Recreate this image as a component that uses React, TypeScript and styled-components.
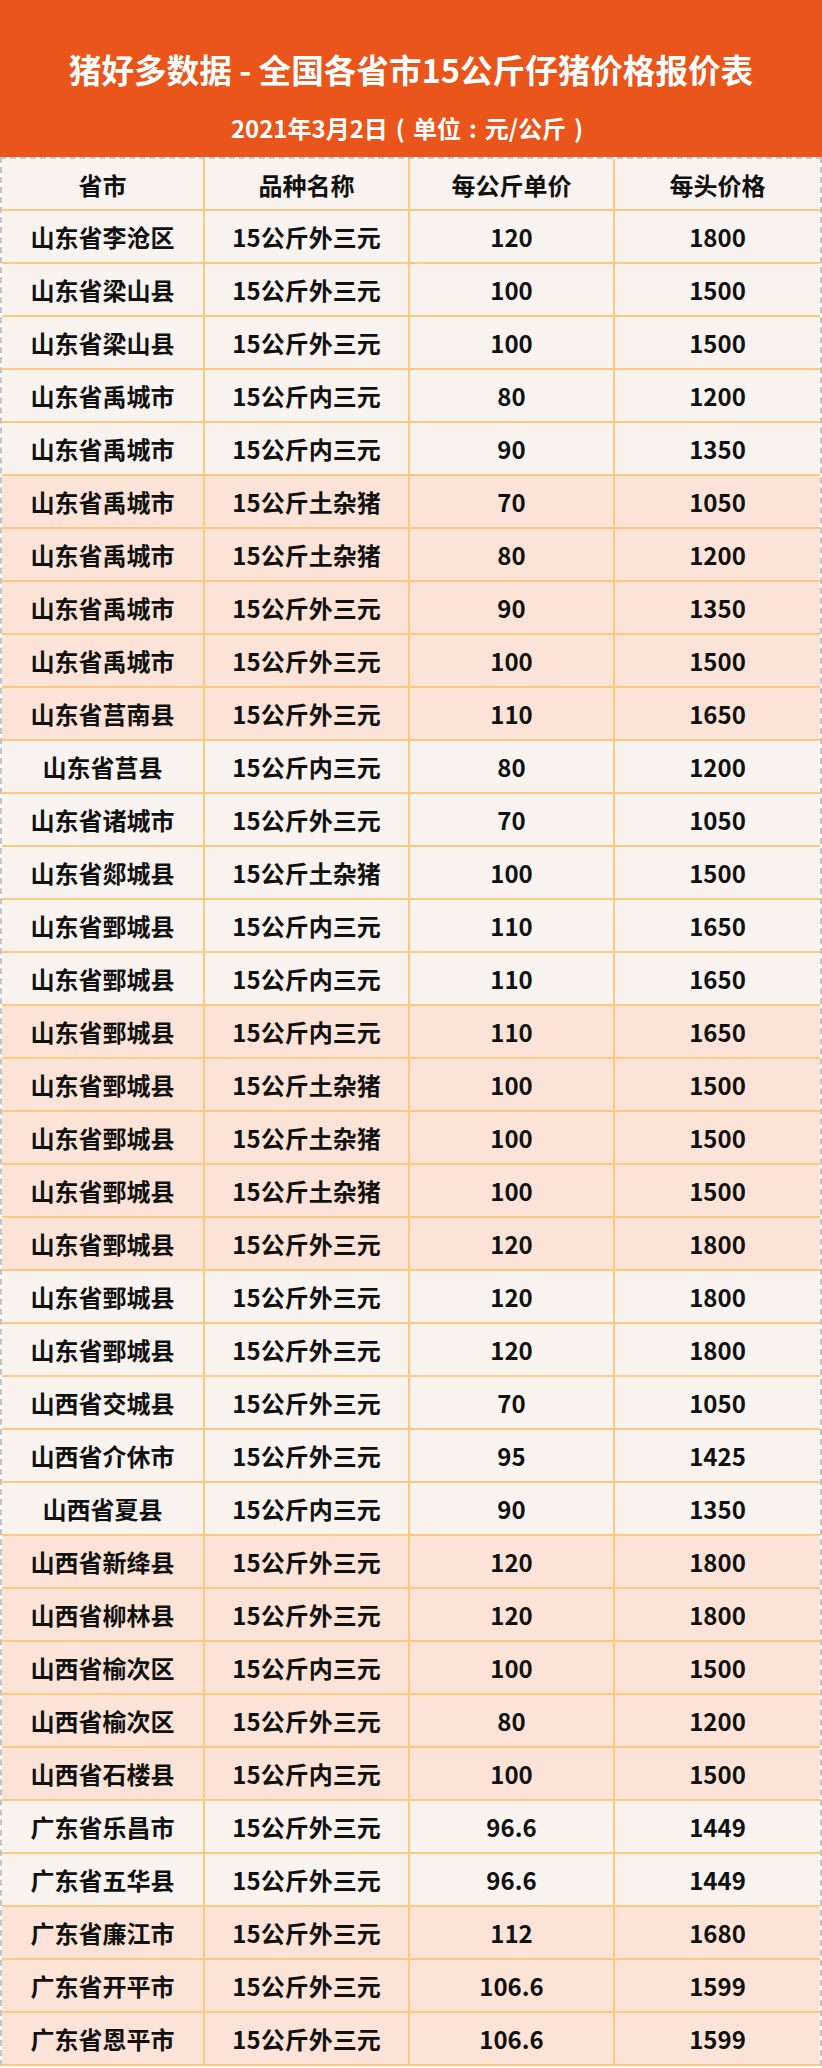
import React from "react";
import styled, { createGlobalStyle } from "styled-components";

const Global = createGlobalStyle`
  html, body { margin: 0; padding: 0; background: #ffffff; }
  body { font-family: "Noto Sans CJK SC", "Noto Sans", sans-serif; }
`;

type Row = [string, string, string, string];

const rows: Row[] = [
  ["山东省李沧区", "15公斤外三元", "120", "1800"],
  ["山东省梁山县", "15公斤外三元", "100", "1500"],
  ["山东省梁山县", "15公斤外三元", "100", "1500"],
  ["山东省禹城市", "15公斤内三元", "80", "1200"],
  ["山东省禹城市", "15公斤内三元", "90", "1350"],
  ["山东省禹城市", "15公斤土杂猪", "70", "1050"],
  ["山东省禹城市", "15公斤土杂猪", "80", "1200"],
  ["山东省禹城市", "15公斤外三元", "90", "1350"],
  ["山东省禹城市", "15公斤外三元", "100", "1500"],
  ["山东省莒南县", "15公斤外三元", "110", "1650"],
  ["山东省莒县", "15公斤内三元", "80", "1200"],
  ["山东省诸城市", "15公斤外三元", "70", "1050"],
  ["山东省郯城县", "15公斤土杂猪", "100", "1500"],
  ["山东省鄄城县", "15公斤内三元", "110", "1650"],
  ["山东省鄄城县", "15公斤内三元", "110", "1650"],
  ["山东省鄄城县", "15公斤内三元", "110", "1650"],
  ["山东省鄄城县", "15公斤土杂猪", "100", "1500"],
  ["山东省鄄城县", "15公斤土杂猪", "100", "1500"],
  ["山东省鄄城县", "15公斤土杂猪", "100", "1500"],
  ["山东省鄄城县", "15公斤外三元", "120", "1800"],
  ["山东省鄄城县", "15公斤外三元", "120", "1800"],
  ["山东省鄄城县", "15公斤外三元", "120", "1800"],
  ["山西省交城县", "15公斤外三元", "70", "1050"],
  ["山西省介休市", "15公斤外三元", "95", "1425"],
  ["山西省夏县", "15公斤内三元", "90", "1350"],
  ["山西省新绛县", "15公斤外三元", "120", "1800"],
  ["山西省柳林县", "15公斤外三元", "120", "1800"],
  ["山西省榆次区", "15公斤内三元", "100", "1500"],
  ["山西省榆次区", "15公斤外三元", "80", "1200"],
  ["山西省石楼县", "15公斤内三元", "100", "1500"],
  ["广东省乐昌市", "15公斤外三元", "96.6", "1449"],
  ["广东省五华县", "15公斤外三元", "96.6", "1449"],
  ["广东省廉江市", "15公斤外三元", "112", "1680"],
  ["广东省开平市", "15公斤外三元", "106.6", "1599"],
  ["广东省恩平市", "15公斤外三元", "106.6", "1599"],
];

const peachRows = new Set([5, 6, 7, 8, 9, 15, 16, 17, 18, 19, 25, 26, 27, 28, 29, 32, 33, 34]);

const Page = styled.div`
  width: 822px;
  display: flex;
  flex-direction: column;
`;

const Banner = styled.header`
  height: 157px;
  background: #e9551a;
  color: #ffffff;
  display: flex;
  flex-direction: column;
  align-items: center;
  box-sizing: border-box;
  padding-top: 46px;
`;

const Title = styled.h1`
  margin: 0;
  font-size: 32.6px;
  font-weight: 700;
  line-height: 46px;
  letter-spacing: 0;
`;

const Subtitle = styled.div`
  margin-top: 20px;
  font-size: 24px;
  font-weight: 700;
  line-height: 32px;
`;

const Punct = styled.span`
  display: inline-block;
  margin: 0 8px;
`;

const Table = styled.div`
  display: flex;
  flex-direction: column;
  border-left: 2px dashed #c4c4c4;
  border-right: 2px dashed #c4c4c4;
  border-top: 2px dashed #c4c4c4;
  box-sizing: border-box;
`;

const RowLine = styled.div<{ $peach?: boolean; $head?: boolean }>`
  display: grid;
  grid-template-columns: 203px 205px 205px 1fr;
  height: ${(p) => (p.$head ? 52 : 53)}px;
  box-sizing: border-box;
  border-bottom: 2px solid #fcca7f;
  background: ${(p) => (p.$peach ? "#fbe4d7" : "#f8f3ef")};
`;

const Cell = styled.div`
  display: flex;
  align-items: center;
  justify-content: center;
  box-sizing: border-box;
  border-right: 2px solid #fcca7f;
  font-size: 24px;
  font-weight: 700;
  color: #111111;
  white-space: nowrap;
  &:last-child { border-right: none; }
`;

export default function App() {
  return (
    <Page>
      <Global />
      <Banner>
        <Title>猪好多数据 - 全国各省市15公斤仔猪价格报价表</Title>
        <Subtitle>
          2021年3月2日<Punct>(</Punct>单位<Punct>:</Punct>元/公斤<Punct>)</Punct>
        </Subtitle>
      </Banner>
      <Table>
        <RowLine $head>
          <Cell>省市</Cell>
          <Cell>品种名称</Cell>
          <Cell>每公斤单价</Cell>
          <Cell>每头价格</Cell>
        </RowLine>
        {rows.map((r, i) => (
          <RowLine key={i} $peach={peachRows.has(i)}>
            {r.map((c, j) => (
              <Cell key={j}>{c}</Cell>
            ))}
          </RowLine>
        ))}
      </Table>
    </Page>
  );
}
